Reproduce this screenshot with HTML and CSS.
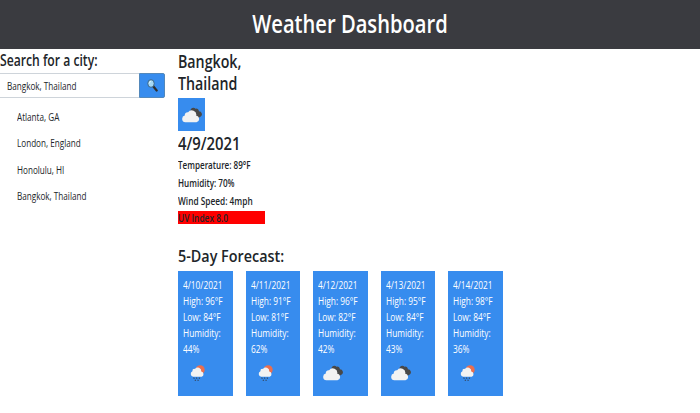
FILE: index.html
```html
<!DOCTYPE html>
<html lang="en">
<head>
<meta charset="utf-8">
<title>Weather Dashboard</title>
<link rel="stylesheet" href="styles.css">
</head>
<body>
<svg class="defs" aria-hidden="true">
  <symbol id="cloudy" viewBox="0 0 20 16">
    <path fill="#484848" d="M8.500 4A2.900 2.900 0 0 1 13.500 1.700a2.600 2.600 0 0 1 3.400 2.500 3 3 0 0 1 1.500 5.600L14.600 12 9 6Z"/>
    <path fill="#f2f2f2" d="M3.300 15.300a3.400 3.400 0 0 1-.5-6.700 2.900 2.900 0 0 1 3.300-3.300 4.500 4.500 0 0 1 8.100 3.500 3.300 3.300 0 0 1 .3 6.500Z"/>
  </symbol>
  <symbol id="rain" viewBox="0 0 15 17">
    <circle cx="10.200" cy="4.800" r="4.500" fill="#ec6e4c"/>
    <path fill="#f2f2f2" d="M3.200 11.700a2.900 2.900 0 0 1-.8-5.500 2.200 2.200 0 0 1 2.500-2.300 3.600 3.600 0 0 1 6.400 2.600 2.700 2.700 0 0 1 .4 5.200Z"/>
    <path stroke="#34465c" stroke-width="1.300" d="M4.200 12.600l-.5 1M6.900 12.600l-.5 1M9.600 12.600l-.5 1M5.600 14.800l-.5 1M8.300 14.800l-.5 1"/>
  </symbol>
</svg>
<header class="banner"><h1>Weather Dashboard</h1></header>
<main class="layout">
  <aside class="search">
    <h2 class="heading">Search for a city:</h2>
    <form class="search-form">
      <div class="field"><span class="text">Bangkok, Thailand</span></div>
      <button class="go" type="button" aria-label="Search">
        <svg width="11" height="13" viewBox="0 0 11 13"><path d="M6.200 7.200l3.500 4.300" stroke="#302f2d" stroke-width="2.200" stroke-linecap="round"/><ellipse cx="4" cy="4.500" rx="3.200" ry="3.800" fill="#a5d8f5" stroke="#34566c" stroke-width=".8"/><path d="M2.400 4.300q.2-1.600 1.400-2" fill="none" stroke="#e6f8ff"/></svg>
      </button>
    </form>
    <ul class="cities">
      <li><span class="text">Atlanta, GA</span></li>
      <li><span class="text">London, England</span></li>
      <li><span class="text">Honolulu, HI</span></li>
      <li><span class="text">Bangkok, Thailand</span></li>
    </ul>
  </aside>
  <section class="weather">
    <div class="current">
      <h2 class="city"><span>Bangkok,</span><span>Thailand</span></h2>
      <div class="icon"><svg width="20" height="16"><use href="#cloudy"/></svg></div>
      <h2 class="date"><span>4/9/2021</span></h2>
      <p><span class="text">Temperature: 89°F</span></p>
      <p><span class="text">Humidity: 70%</span></p>
      <p><span class="text">Wind Speed: 4mph</span></p>
      <p class="uv"><span class="text">UV Index 8.0</span></p>
    </div>
    <h2 class="heading forecast-title">5-Day Forecast:</h2>
    <div class="forecast">
      <article class="card"><span>4/10/2021</span><span>High: 96°F</span><span>Low: 84°F</span><span>Humidity:</span><span>44%</span><svg class="rain"><use href="#rain"/></svg></article>
      <article class="card"><span>4/11/2021</span><span>High: 91°F</span><span>Low: 81°F</span><span>Humidity:</span><span>62%</span><svg class="rain"><use href="#rain"/></svg></article>
      <article class="card"><span>4/12/2021</span><span>High: 96°F</span><span>Low: 82°F</span><span>Humidity:</span><span>42%</span><svg class="cloud"><use href="#cloudy"/></svg></article>
      <article class="card"><span>4/13/2021</span><span>High: 95°F</span><span>Low: 84°F</span><span>Humidity:</span><span>43%</span><svg class="cloud"><use href="#cloudy"/></svg></article>
      <article class="card"><span>4/14/2021</span><span>High: 98°F</span><span>Low: 84°F</span><span>Humidity:</span><span>36%</span><svg class="rain"><use href="#rain"/></svg></article>
    </div>
  </section>
</main>
</body>
</html>
```
FILE: styles.css
```css
* { box-sizing: border-box; }
body { margin: 0; height: 413px; overflow: hidden; background: #fff; color: #212529; font: 10.300px/16px "Open Sans", "Noto Sans", sans-serif; }
h1, h2, p, ul { margin: 0; padding: 0; font-weight: 500; }
.defs { display: block; width: 0; height: 0; }
.banner { height: 49px; background: #3a3b40; color: #fff; text-align: center; }
.banner h1 { font-size: 25px; line-height: 46px; font-weight: 600; transform: scaleX(.806); }
.layout { display: flex; }
.search { width: 178px; }
.heading { font-size: 15.500px; line-height: 22px; font-weight: 600; white-space: nowrap; transform: scaleX(.785); transform-origin: left; }
.text { display: inline-block; white-space: nowrap; transform: scaleX(.79); transform-origin: left; }
.search-form { display: flex; width: 165px; height: 25px; margin-top: 2px; }
.field { flex: 1; padding-left: 6.500px; line-height: 24px; border: 1px solid #ced4da; border-left: 0; border-right: 0; }
.go { display: flex; align-items: center; justify-content: center; width: 26px; padding: 0; background: #378cee; border: 1px solid #5388bb; border-radius: 0 2px 2px 0; }
.cities { list-style: none; padding: 6px 0 0 17px; }
.cities li { height: 26.300px; line-height: 26px; }
.weather { flex: 1; }
.current { height: 196px; padding-top: 1px; }
.city span, .date span { display: block; font-size: 18px; line-height: 22px; font-weight: 600; transform: scaleX(.79); transform-origin: left; }
.date { margin-bottom: 1px; }
.date span { transform: scaleX(.825); }
.icon { display: flex; align-items: center; justify-content: center; width: 27px; height: 33px; margin: 4px 0 1px; background: #378cee; }
.icon svg { display: block; }
.current p { height: 18px; line-height: 20px; font-weight: 600; }
.current p .text { transform: scaleX(.785); }
.current p:nth-of-type(3) .text { transform: scaleX(.805); }
.current .uv { width: 87px; height: 13px; line-height: 14px; margin-top: 2px; background: #f00; }
.current .uv .text { transform: scaleX(.81); }
.forecast-title { height: 26px; line-height: 22px; font-size: 17px; transform: scaleX(.845); }
.forecast { display: flex; gap: 13px; }
.card { display: flex; flex-direction: column; width: 54.500px; height: 125px; padding: 7px 0 0 5px; background: #378cee; color: #fff; }
.card span { width: max-content; line-height: 15.900px; transform: scaleX(.81); transform-origin: left; }
.rain { width: 15px; height: 17px; margin: 7.500px 0 0 7px; }
.cloud { width: 20px; height: 16px; margin: 7.500px 0 0 5px; }
```
